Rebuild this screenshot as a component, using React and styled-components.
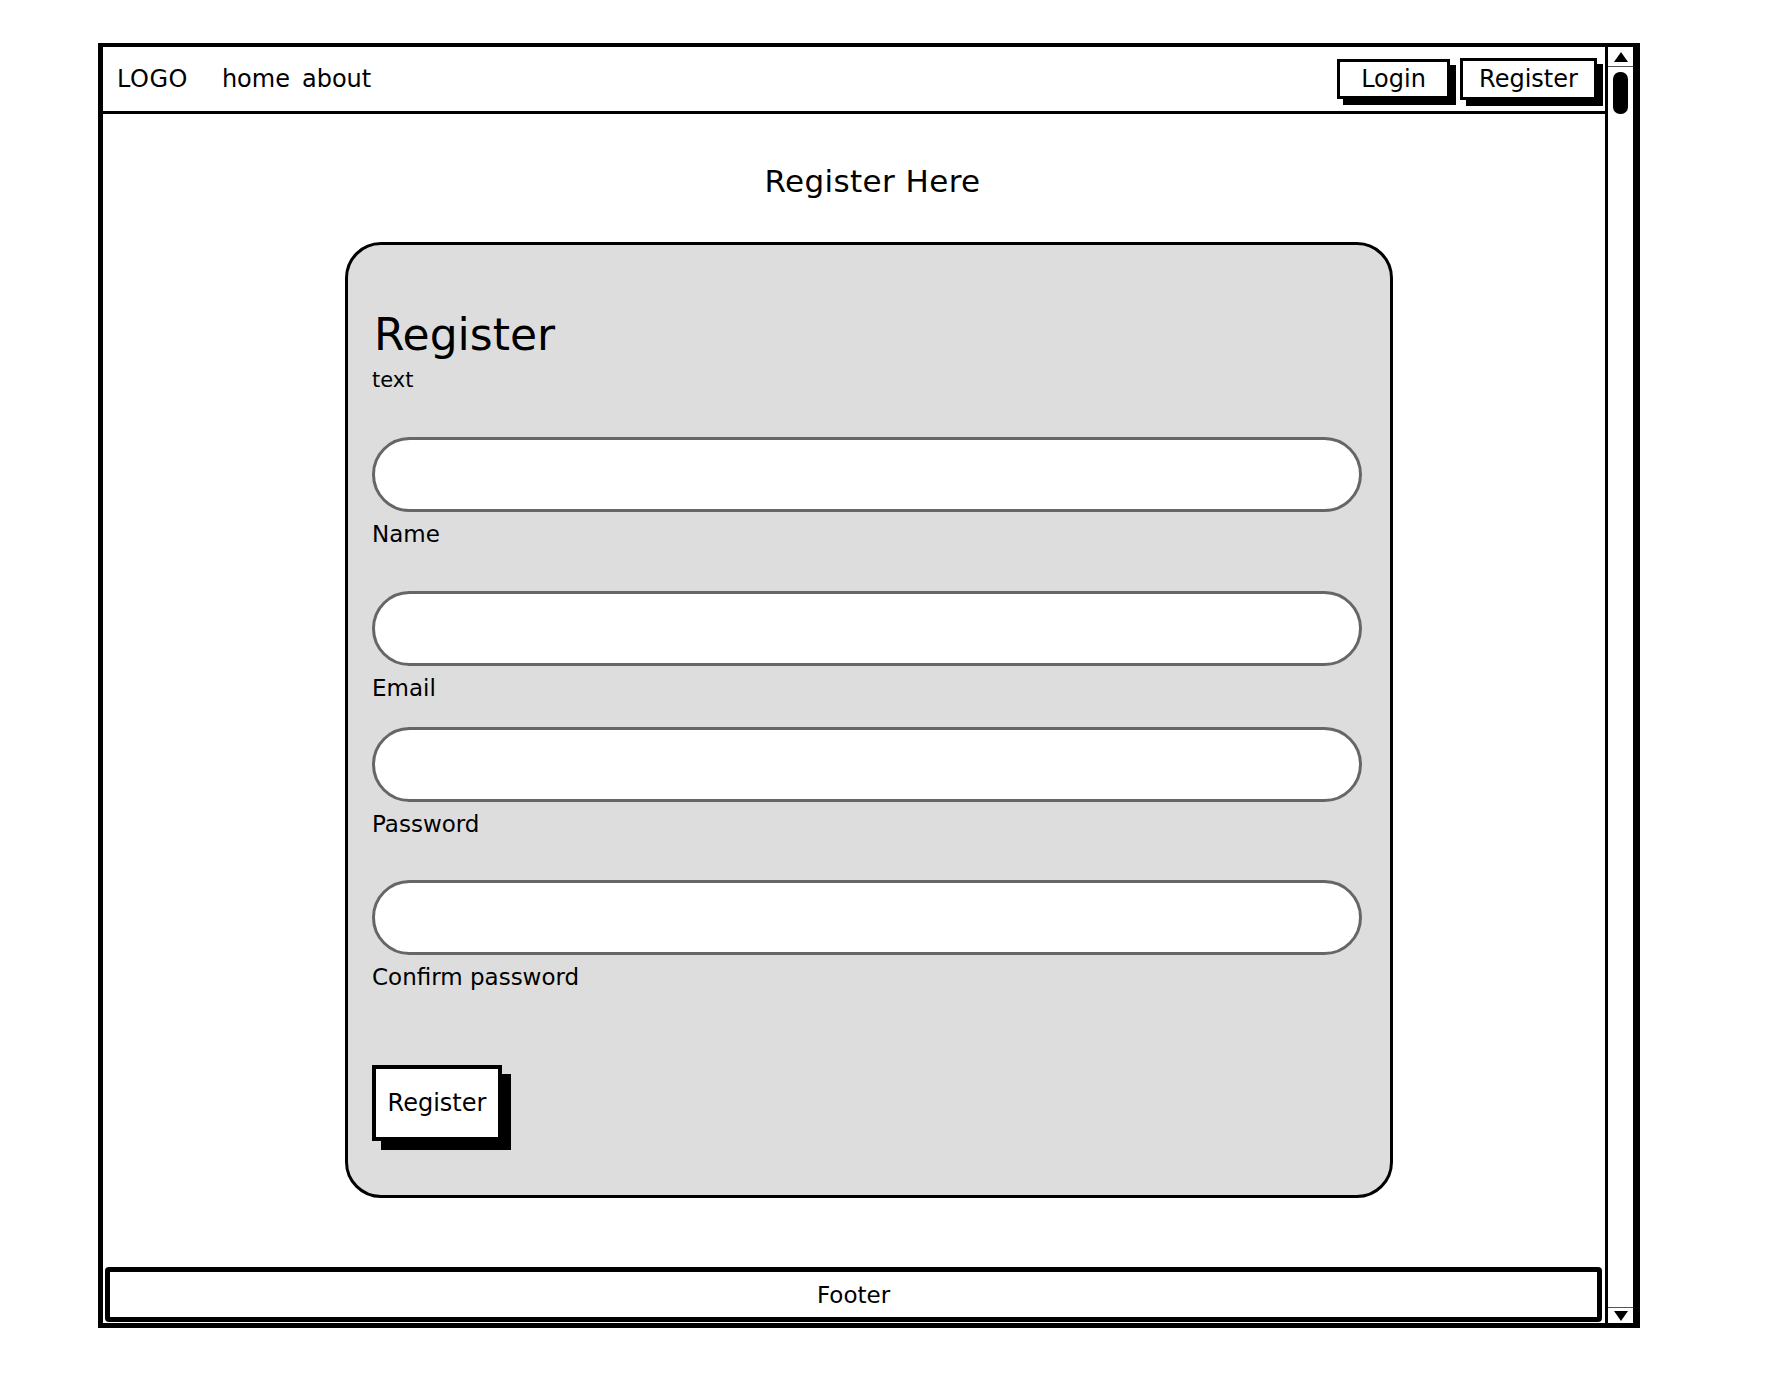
import styled, { createGlobalStyle } from 'styled-components';

const GlobalStyle = createGlobalStyle`
  body {
    margin: 0;
    background: #fff;
    color: #000;
    font-family: "DejaVu Sans", "Liberation Sans", sans-serif;
  }
  * {
    box-sizing: border-box;
  }
`;

const fields = [
  { label: 'Name', after: 44 },
  { label: 'Email', after: 26 },
  { label: 'Password', after: 43 },
  { label: 'Confirm password', after: 75 },
];

const App = () => {
  return (
    <>
      <GlobalStyle />
      <Page>
        <Window>
          <Main>
            <Navbar>
              <Logo>LOGO</Logo>
              <NavLinks>
                <NavLink>home</NavLink>
                <NavLink>about</NavLink>
              </NavLinks>
              <NavButtons>
                <NavButton $w={113} $h={40}>
                  Login
                </NavButton>
                <NavButton $w={137} $h={42}>
                  Register
                </NavButton>
              </NavButtons>
            </Navbar>
            <Content>
              <PageTitle>Register Here</PageTitle>
              <Card>
                <CardTitle>Register</CardTitle>
                <CardText>text</CardText>
                <Fields>
                  {fields.map(f => (
                    <Field key={f.label} $after={f.after}>
                      <Input />
                      <Label>{f.label}</Label>
                    </Field>
                  ))}
                </Fields>
                <SubmitButton>Register</SubmitButton>
              </Card>
            </Content>
            <Footer>Footer</Footer>
          </Main>
          <Scrollbar>
            <ArrowCell $top>
              <ArrowUp />
            </ArrowCell>
            <Thumb />
            <Track />
            <ArrowCell>
              <ArrowDown />
            </ArrowCell>
          </Scrollbar>
        </Window>
      </Page>
    </>
  );
};

const Page = styled.div`
  padding: 43px 0 0 98px;
`;
const Window = styled.div`
  display: flex;
  width: 1542px;
  height: 1285px;
  border: 5px solid #000;
  border-top-width: 4px;
  border-right-width: 7px;
`;
const Main = styled.div`
  flex: 1;
  min-width: 0;
  display: flex;
  flex-direction: column;
`;
const Navbar = styled.header`
  display: flex;
  align-items: center;
  height: 67px;
  padding: 0 8px 0 14px;
  border-bottom: 3px solid #000;
`;
const Logo = styled.div`
  font-size: 24px;
  letter-spacing: 0.5px;
`;
const NavLinks = styled.nav`
  display: flex;
  gap: 12px;
  margin-left: 34px;
`;
const NavLink = styled.span`
  font-size: 24px;
`;
const NavButtons = styled.div`
  display: flex;
  align-items: center;
  gap: 10px;
  margin-left: auto;
`;
const NavButton = styled.button`
  width: ${p => p.$w}px;
  height: ${p => p.$h}px;
  padding: 0;
  border: 3px solid #000;
  background: #fff;
  box-shadow: 6px 6px 0 #000;
  font-family: inherit;
  font-size: 24px;
  color: #000;
`;
const Content = styled.main`
  flex: 1;
  display: flex;
  flex-direction: column;
  align-items: center;
  padding-left: 30px;
`;
const PageTitle = styled.h1`
  margin: 49px 0 0 7px;
  font-size: 31px;
  font-weight: normal;
  letter-spacing: 0.4px;
`;
const Card = styled.section`
  width: 1048px;
  margin-top: 43px;
  padding: 64px 28px 54px 24px;
  border: 3px solid #000;
  border-radius: 36px;
  background: #dddddd;
`;
const CardTitle = styled.h2`
  margin: 0 0 0 2px;
  font-size: 44px;
  font-weight: normal;
`;
const CardText = styled.div`
  margin-top: 8px;
  font-size: 21px;
`;
const Fields = styled.div`
  display: flex;
  flex-direction: column;
  margin-top: 45px;
`;
const Field = styled.div`
  display: flex;
  flex-direction: column;
  margin-bottom: ${p => p.$after}px;
`;
const Input = styled.input`
  width: 100%;
  height: 75px;
  border: 3px solid #666;
  border-radius: 38px;
  background: #fff;
  outline: none;
`;
const Label = styled.label`
  margin-top: 9px;
  font-size: 23px;
`;
const SubmitButton = styled.button`
  width: 130px;
  height: 76px;
  padding: 0;
  border: 4px solid #000;
  background: #fff;
  box-shadow: 9px 9px 0 #000;
  font-family: inherit;
  font-size: 24px;
  color: #000;
`;
const Footer = styled.footer`
  display: flex;
  align-items: center;
  justify-content: center;
  height: 55px;
  margin: 0 3px 1px 2px;
  border: 5px solid #000;
  border-radius: 4px;
  font-size: 23px;
`;
const Scrollbar = styled.aside`
  display: flex;
  flex-direction: column;
  align-items: center;
  width: 28px;
  border-left: 3px solid #000;
`;
const ArrowCell = styled.div`
  display: flex;
  align-items: center;
  justify-content: center;
  width: 100%;
  height: ${p => (p.$top ? 20 : 16)}px;
  border-${p => (p.$top ? 'bottom' : 'top')}: 1px solid #555;
`;
const ArrowUp = styled.div`
  width: 0;
  height: 0;
  border-left: 7px solid transparent;
  border-right: 7px solid transparent;
  border-bottom: 10px solid #000;
`;
const ArrowDown = styled.div`
  width: 0;
  height: 0;
  border-left: 7px solid transparent;
  border-right: 7px solid transparent;
  border-top: 10px solid #000;
`;
const Thumb = styled.div`
  width: 15px;
  height: 42px;
  margin-top: 5px;
  border-radius: 7px;
  background: #000;
`;
const Track = styled.div`
  flex: 1;
`;

export default App;
